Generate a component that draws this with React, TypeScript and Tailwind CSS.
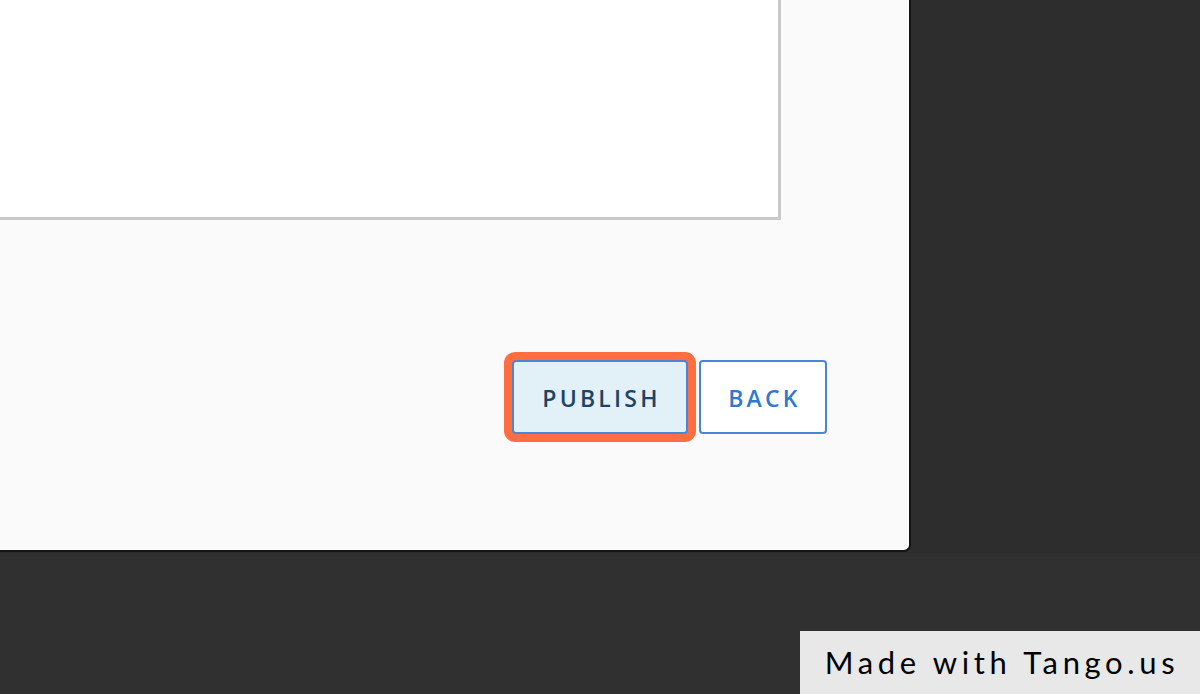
export default function App() {
  return (
    <div className="relative w-[1200px] h-[694px] overflow-hidden bg-[#303030]" style={{ fontFamily: '"Open Sans", "Liberation Sans", sans-serif' }}>
      <div className="flex h-[553px] border-b border-[#2a2a2a]">
        <div className="w-[911px] h-full bg-[#fafafa] rounded-br-[7px] border-r-2 border-b-2 border-[#151515] flex flex-col">
          <div className="w-[781px] h-[220px] bg-white border-r-[3px] border-b-[3px] border-[#c9c9c9]" />
          <div className="flex justify-end gap-[11px] pr-[82px] mt-[140px]">
            <button className="w-[176px] h-[74px] rounded-[4px] bg-[#e2f0f7] border-2 border-[#4a86d8] text-[#1c4466] text-[23px] font-semibold tracking-[0.14em] pl-[3px] pt-[2px] shadow-[0_0_0_8px_#fe6e40]">
              PUBLISH
            </button>
            <button className="w-[128px] h-[74px] rounded-[4px] bg-white border-2 border-[#4a86d8] text-[#2f78cf] text-[23px] font-semibold tracking-[0.14em] pl-[3px] pt-[2px]">
              BACK
            </button>
          </div>
        </div>
        <div className="flex-1 bg-[#2d2d2d]" />
      </div>
      <div className="absolute right-0 bottom-0 w-[400px] h-[63px] bg-[#e8e8e8] flex items-center justify-center">
        <span className="text-[31px] text-black tracking-[0.15em] pl-[4px]" style={{ fontFamily: 'Lato, "Liberation Sans", sans-serif' }}>Made with Tango.us</span>
      </div>
    </div>
  );
}
